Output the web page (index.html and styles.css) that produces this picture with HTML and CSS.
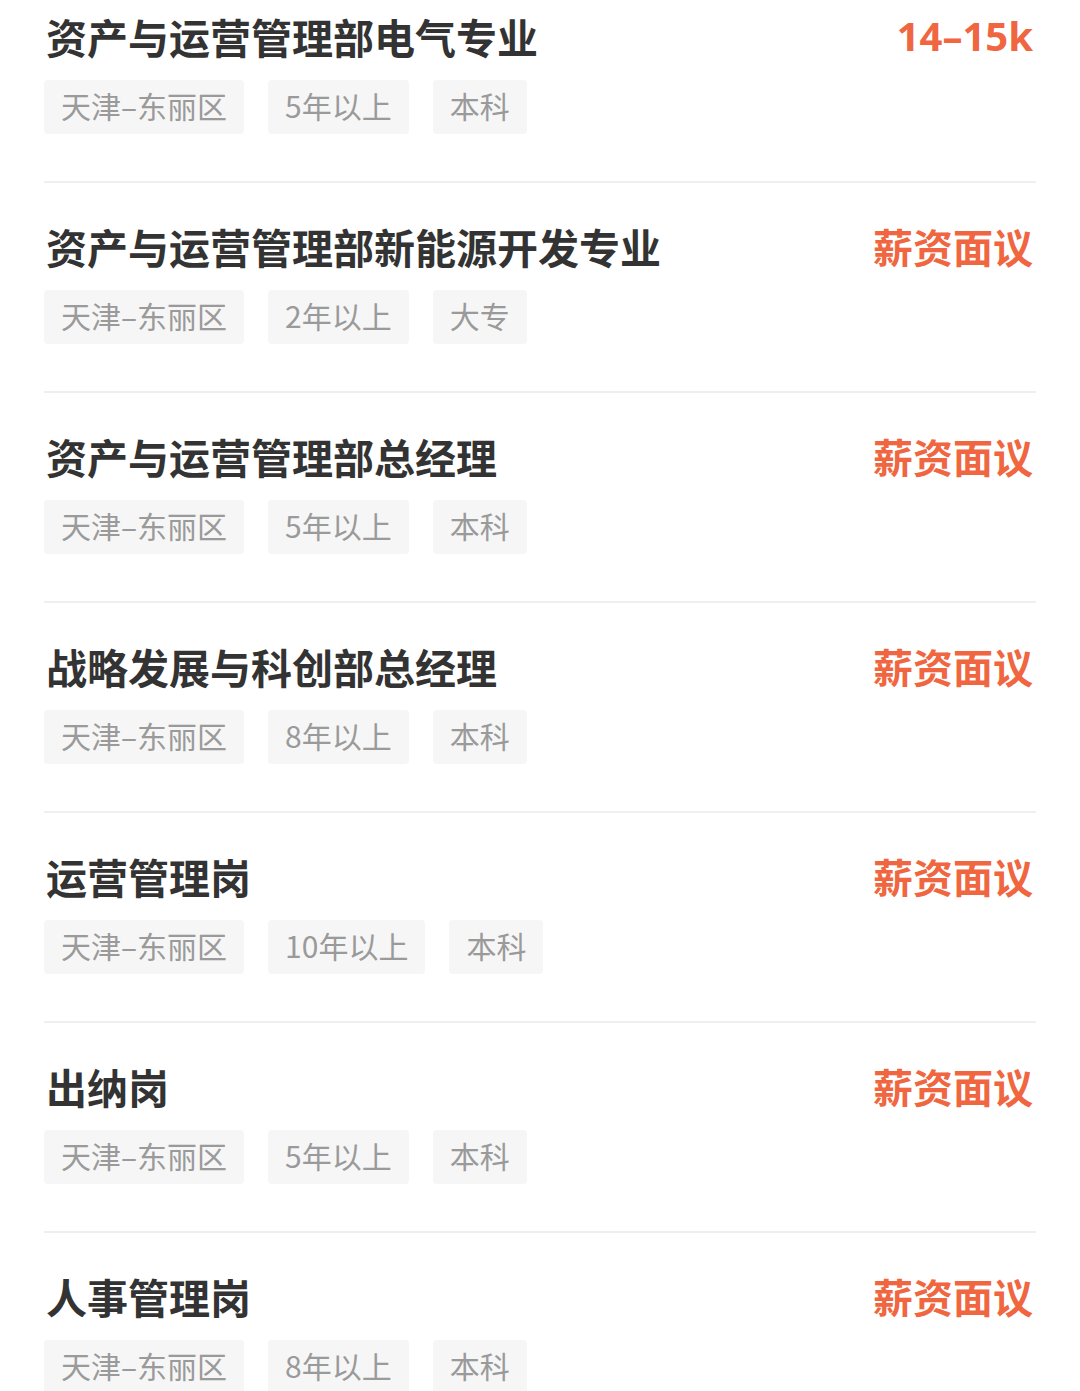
FILE: index.html
```html
<!DOCTYPE html>
<html>
  <head>
    <meta charset="utf-8">
    <title>职位列表</title>
    <link rel="stylesheet" href="styles.css">
  </head>
  <body>
    <div class="job-list">
      <div class="job">
        <div class="job-head">
          <div class="job-title">资产与运营管理部电气专业</div>
          <div class="job-salary num">14–15k</div>
        </div>
        <div class="tags">
          <span class="tag">天津–东丽区</span>
          <span class="tag">5年以上</span>
          <span class="tag">本科</span>
        </div>
      </div>
      <div class="job">
        <div class="job-head">
          <div class="job-title">资产与运营管理部新能源开发专业</div>
          <div class="job-salary">薪资面议</div>
        </div>
        <div class="tags">
          <span class="tag">天津–东丽区</span>
          <span class="tag">2年以上</span>
          <span class="tag">大专</span>
        </div>
      </div>
      <div class="job">
        <div class="job-head">
          <div class="job-title">资产与运营管理部总经理</div>
          <div class="job-salary">薪资面议</div>
        </div>
        <div class="tags">
          <span class="tag">天津–东丽区</span>
          <span class="tag">5年以上</span>
          <span class="tag">本科</span>
        </div>
      </div>
      <div class="job">
        <div class="job-head">
          <div class="job-title">战略发展与科创部总经理</div>
          <div class="job-salary">薪资面议</div>
        </div>
        <div class="tags">
          <span class="tag">天津–东丽区</span>
          <span class="tag">8年以上</span>
          <span class="tag">本科</span>
        </div>
      </div>
      <div class="job">
        <div class="job-head">
          <div class="job-title">运营管理岗</div>
          <div class="job-salary">薪资面议</div>
        </div>
        <div class="tags">
          <span class="tag">天津–东丽区</span>
          <span class="tag">10年以上</span>
          <span class="tag">本科</span>
        </div>
      </div>
      <div class="job">
        <div class="job-head">
          <div class="job-title">出纳岗</div>
          <div class="job-salary">薪资面议</div>
        </div>
        <div class="tags">
          <span class="tag">天津–东丽区</span>
          <span class="tag">5年以上</span>
          <span class="tag">本科</span>
        </div>
      </div>
      <div class="job">
        <div class="job-head">
          <div class="job-title">人事管理岗</div>
          <div class="job-salary">薪资面议</div>
        </div>
        <div class="tags">
          <span class="tag">天津–东丽区</span>
          <span class="tag">8年以上</span>
          <span class="tag">本科</span>
        </div>
      </div>
    </div>
  </body>
</html>
```

FILE: styles.css
```css
body {
  margin: 0;
  background: #fff;
  font-family: "Noto Sans CJK SC", "Noto Sans", sans-serif;
  overflow: hidden;
}
.job-list {
  padding: 0 44px;
}
.job {
  padding: 37px 0 47px;
  border-bottom: 2px solid #efefef;
}
.job:first-child {
  padding-top: 10px;
}
.job-head {
  display: flex;
  justify-content: space-between;
  align-items: center;
  height: 56px;
}
.job-title {
  font-size: 41px;
  font-weight: bold;
  color: #333;
  line-height: 52px;
  margin-bottom: 4px;
  padding-left: 2px;
}
.job-salary {
  font-size: 40px;
  font-weight: bold;
  color: #ef6640;
  line-height: 52px;
  margin-bottom: 4px;
  padding-right: 3px;
}
.job-salary.num {
  font-family: "Noto Sans", "Noto Sans CJK SC", sans-serif;
  font-size: 40px;
}
.tags {
  display: flex;
  gap: 24px;
  margin-top: 14px;
}
.tag {
  height: 54px;
  box-sizing: border-box;
  line-height: 50px;
  padding: 0 17px 4px;
  font-size: 30px;
  color: #9a9a9a;
  background: #f6f6f6;
  border-radius: 4px;
}
```
